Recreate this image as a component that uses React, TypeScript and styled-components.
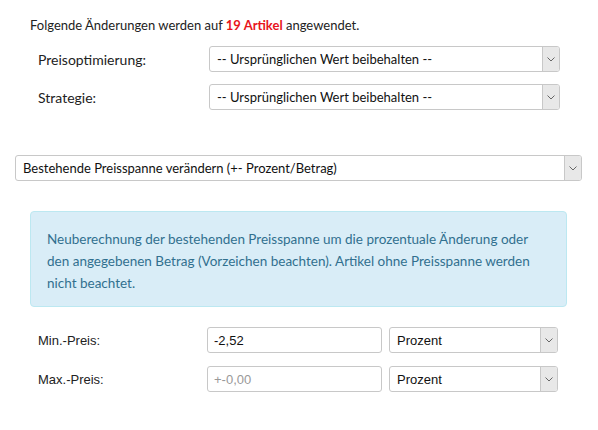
import styled, { createGlobalStyle } from "styled-components"

const COLORS = {
  text: "#222",
  red: "#e8141b",
  border: "#c8c8c8",
  arrowBg: "#e8e8e8",
  infoBg: "#d9edf7",
  infoBorder: "#bce8f1",
  infoText: "#31708f",
  placeholder: "#999",
}

const GlobalStyle = createGlobalStyle`
  body {
    margin: 0;
    background: #fff;
    font-family: "Lato", "Liberation Sans", sans-serif;
    color: ${COLORS.text};
  }
`

const Page = styled.div`
  width: 598px;
  padding-top: 15px;
`

const Header = styled.p`
  margin: 0 0 11px 30px;
  font-size: 13px;
  line-height: 20px;
`

const Count = styled.strong`
  color: ${COLORS.red};
  font-weight: 700;
`

const Row = styled.div<{ $labelWidth: number }>`
  display: grid;
  grid-template-columns: ${({ $labelWidth }) => $labelWidth}px 1fr;
  align-items: center;
  margin-left: 38px;
  margin-right: 38px;
  & + & {
    margin-top: 12px;
  }
`

const Label = styled.span<{ $arial?: boolean }>`
  font-size: ${({ $arial }) => ($arial ? "13px" : "14px")};
  font-family: ${({ $arial }) => ($arial ? '"Liberation Sans", Arial, sans-serif' : "inherit")};
`

const SelectWrap = styled.div<{ $width?: number }>`
  position: relative;
  width: ${({ $width }) => ($width ? `${$width}px` : "auto")};
  height: 26px;
`

const NativeSelect = styled.select<{ $arial?: boolean }>`
  appearance: none;
  width: 100%;
  height: 100%;
  box-sizing: border-box;
  border: 1px solid ${COLORS.border};
  border-radius: 3px;
  background: #fff;
  padding: 0 24px 0 7px;
  font-size: 13px;
  font-family: ${({ $arial }) => ($arial ? '"Liberation Sans", Arial, sans-serif' : '"Lato", sans-serif')};
  color: #111;
  outline: none;
`

const Arrow = styled.span`
  position: absolute;
  top: 1px;
  right: 1px;
  bottom: 1px;
  width: 16px;
  background: ${COLORS.arrowBg};
  border-left: 1px solid ${COLORS.border};
  border-radius: 0 2px 2px 0;
  display: flex;
  align-items: center;
  justify-content: center;
  pointer-events: none;
`

const Select = ({ value, width, arial }: { value: string; width?: number; arial?: boolean }) => (
  <SelectWrap $width={width}>
    <NativeSelect $arial={arial} defaultValue={value}>
      <option>{value}</option>
    </NativeSelect>
    <Arrow>
      <svg width="8" height="5" viewBox="0 0 8 5">
        <path d="M0.5 0.5 L4 4 L7.5 0.5" fill="none" stroke="#666" strokeWidth="1" />
      </svg>
    </Arrow>
  </SelectWrap>
)

const WideSelect = styled.div`
  margin: 45px 16px 0 15px;
`

const Info = styled.div`
  margin: 30px 31px 0 30px;
  padding: 16px 16px 12px 16px;
  background: ${COLORS.infoBg};
  border: 1px solid ${COLORS.infoBorder};
  border-radius: 4px;
  color: ${COLORS.infoText};
  font-size: 13.5px;
  line-height: 22px;
`

const PriceRows = styled.div`
  margin-top: 20px;
  display: flex;
  flex-direction: column;
  gap: 13px;
`

const PriceRow = styled.div`
  display: grid;
  grid-template-columns: 162px 175px 169px;
  column-gap: 7px;
  align-items: center;
  margin-left: 38px;
`

const Input = styled.input`
  height: 26px;
  box-sizing: border-box;
  border: 1px solid ${COLORS.border};
  border-radius: 3px;
  padding: 0 6px;
  font-size: 13px;
  font-family: "Liberation Sans", Arial, sans-serif;
  color: #111;
  outline: none;
  &::placeholder {
    color: ${COLORS.placeholder};
  }
`

export default function App() {
  return (
    <Page>
      <GlobalStyle />
      <Header>
        Folgende Änderungen werden auf <Count>19 Artikel</Count> angewendet.
      </Header>
      <Row $labelWidth={171}>
        <Label>Preisoptimierung:</Label>
        <Select value="-- Ursprünglichen Wert beibehalten --" />
      </Row>
      <Row $labelWidth={171}>
        <Label>Strategie:</Label>
        <Select value="-- Ursprünglichen Wert beibehalten --" />
      </Row>
      <WideSelect>
        <Select value="Bestehende Preisspanne verändern (+- Prozent/Betrag)" />
      </WideSelect>
      <Info>
        Neuberechnung der bestehenden Preisspanne um die prozentuale Änderung oder den angegebenen
        Betrag (Vorzeichen beachten). Artikel ohne Preisspanne werden nicht beachtet.
      </Info>
      <PriceRows>
        <PriceRow>
          <Label $arial>Min.-Preis:</Label>
          <Input defaultValue="-2,52" />
          <Select value="Prozent" arial />
        </PriceRow>
        <PriceRow>
          <Label $arial>Max.-Preis:</Label>
          <Input placeholder="+-0,00" />
          <Select value="Prozent" arial />
        </PriceRow>
      </PriceRows>
    </Page>
  )
}
